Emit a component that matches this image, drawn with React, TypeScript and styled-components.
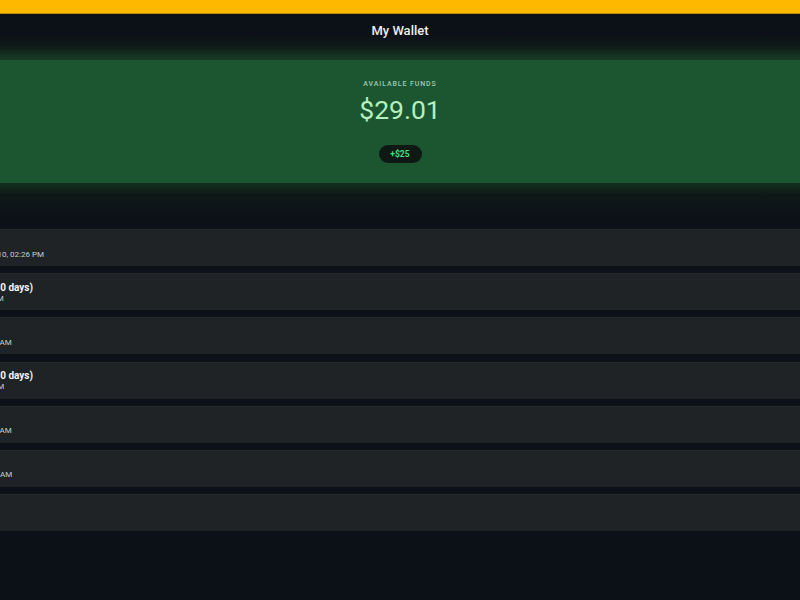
import React from "react";
import styled, { createGlobalStyle } from "styled-components";

const GlobalStyle = createGlobalStyle`
  html, body {
    margin: 0;
    padding: 0;
    background: #0c1017;
    overflow: hidden;
  }
  body {
    font-family: Roboto, "Liberation Sans", sans-serif;
  }
`;

const Page = styled.div`
  width: 800px;
  height: 600px;
  background: #0c1017;
  overflow: hidden;
`;

const TopStripe = styled.div`
  height: 13px;
  background: #ffb800;
  border-bottom: 1px solid #b88a10;
`;

const Header = styled.header`
  height: 32px;
  display: flex;
  align-items: center;
  justify-content: center;
  background: linear-gradient(#0c1017 0%, #0c1017 60%, #0e1a17 100%);
`;

const Title = styled.h1`
  margin: 0;
  font-size: 13px;
  font-weight: 500;
  color: #ebeced;
`;

const Glow = styled.div<{ $flip?: boolean }>`
  height: ${(p) => (p.$flip ? "32px" : "14px")};
  background: ${(p) =>
    p.$flip
      ? "linear-gradient(#14301f 0%, #0e1a17 35%, #0c1017 100%)"
      : "linear-gradient(#0e1a17 0%, #173d26 100%)"};
`;

const FundsCard = styled.section`
  height: 123px;
  background: #1c5631;
  display: flex;
  flex-direction: column;
  align-items: center;
  padding-top: 20px;
  box-sizing: border-box;
`;

const FundsLabel = styled.div`
  font-size: 7px;
  letter-spacing: 0.9px;
  color: #a2c8ac;
  font-weight: 500;
`;

const Amount = styled.div`
  margin-top: 5px;
  font-size: 26.5px;
  color: #b6efbe;
  line-height: 34px;
`;

const TopUp = styled.button`
  margin-top: 18px;
  width: 43px;
  height: 18px;
  border: none;
  border-radius: 9px;
  background: #0e1913;
  color: #3ee283;
  font-family: inherit;
  font-size: 8.5px;
  font-weight: 700;
  padding: 0;
`;

const List = styled.div`
  margin-top: 14px;
  display: flex;
  flex-direction: column;
  gap: 7.2px;
`;

const Row = styled.div`
  height: 37px;
  background: #1f2325;
  border-top: 1px solid #25292c;
  box-sizing: border-box;
  overflow: hidden;
  display: flex;
  align-items: center;
`;

const Info = styled.div`
  margin-left: -58px;
  display: flex;
  flex-direction: column;
  white-space: nowrap;
`;

const ItemName = styled.div`
  font-size: 10px;
  font-weight: 700;
  color: #f2f3f4;
  line-height: 13px;
`;

const ItemDate = styled.div`
  font-size: 8px;
  color: #c8ccd0;
  line-height: 10px;
`;

const items = [
  { name: "Deposit", date: "Purchased Dec 10, 02:26 PM" },
  { name: "Premium+ (30 days)", date: "Jan 10, 02:26 PM" },
  { name: "Deposit", date: "Dec 28 at 09:15 AM" },
  { name: "Premium+ (30 days)", date: "Dec 10, 02:26 PM" },
  { name: "Deposit", date: "Dec 12 at 10:48 AM" },
  { name: "Deposit", date: "Nov 30 at 08:05 AM" },
  { name: "Deposit", date: "" },
];

const App = () => {
  return (
    <Page>
      <GlobalStyle />
      <TopStripe />
      <Header>
        <Title>My Wallet</Title>
      </Header>
      <Glow />
      <FundsCard>
        <FundsLabel>AVAILABLE FUNDS</FundsLabel>
        <Amount>$29.01</Amount>
        <TopUp>+$25</TopUp>
      </FundsCard>
      <Glow $flip />
      <List>
        {items.map((item, i) => (
          <Row key={i}>
            <Info>
              <ItemName>{item.name}</ItemName>
              {item.date && <ItemDate>{item.date}</ItemDate>}
            </Info>
          </Row>
        ))}
      </List>
    </Page>
  );
};

export default App;
